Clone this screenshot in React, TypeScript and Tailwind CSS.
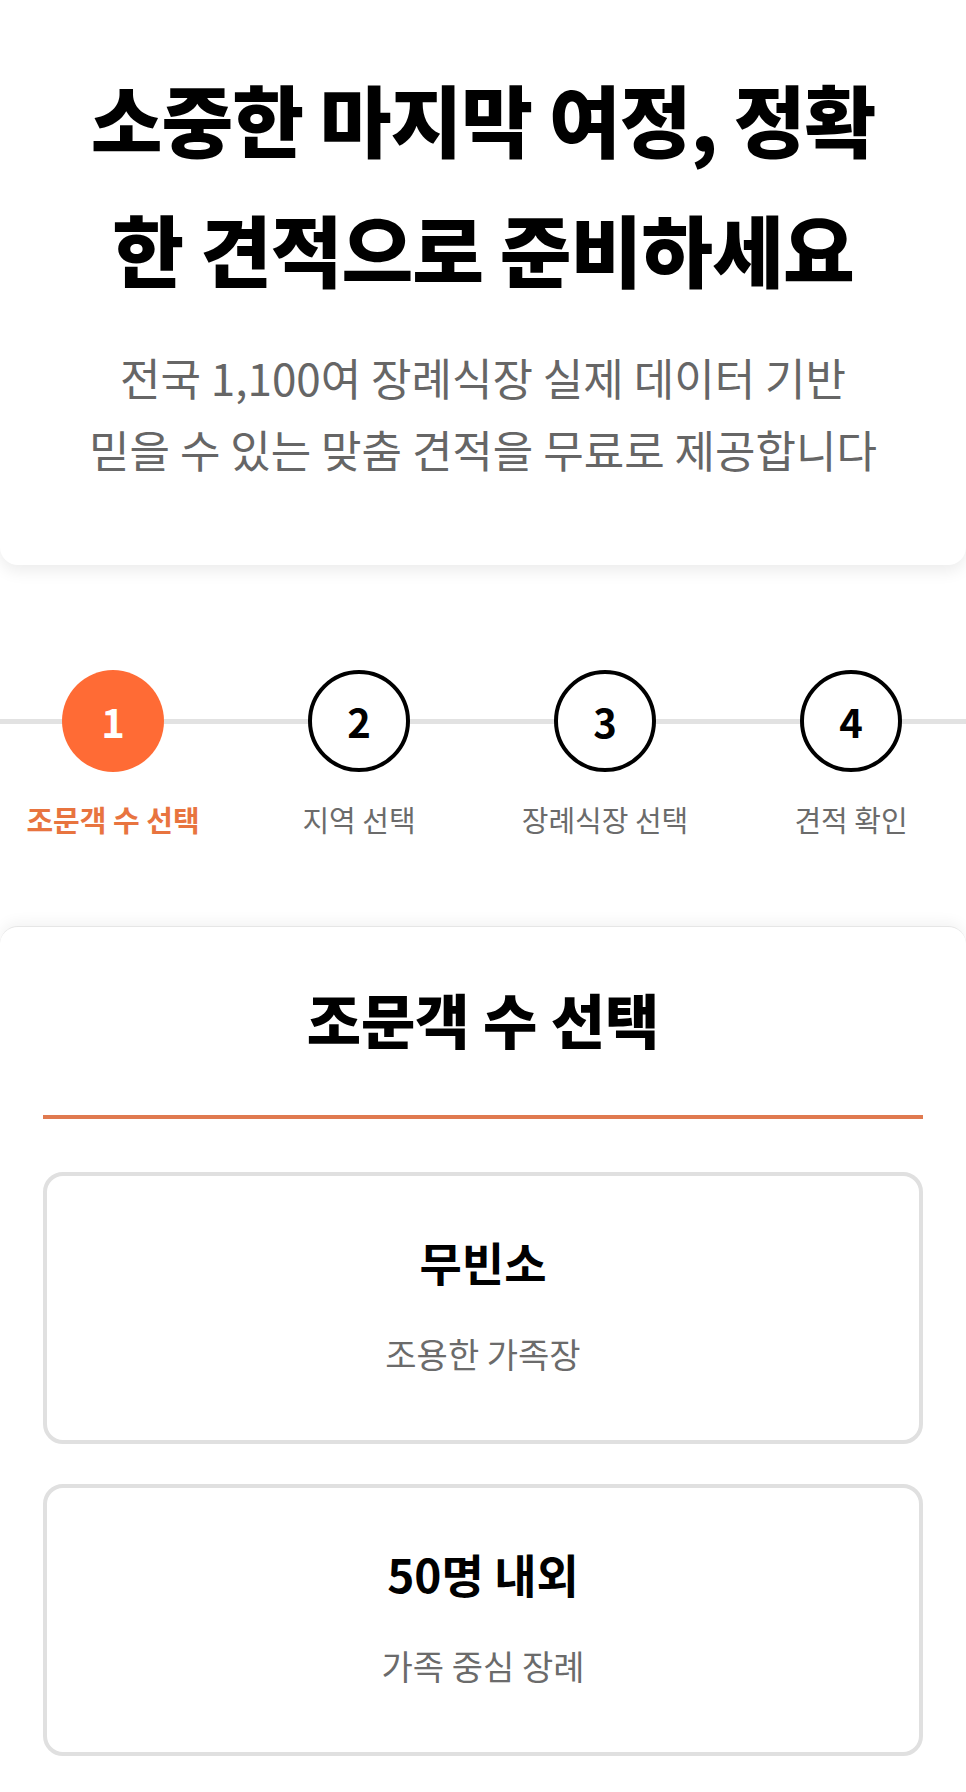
import React from "react";

const font = { fontFamily: '"Noto Sans CJK KR", "Noto Sans", sans-serif' };

const steps = [
  { n: 1, label: "조문객 수 선택", active: true },
  { n: 2, label: "지역 선택", active: false },
  { n: 3, label: "장례식장 선택", active: false },
  { n: 4, label: "견적 확인", active: false },
];

const options = [
  { title: "무빈소", desc: "조용한 가족장" },
  { title: "50명 내외", desc: "가족 중심 장례" },
  { title: "100명 내외", desc: "일반적인 장례" },
];

export default function App() {
  return (
    <div className="min-h-screen w-[966px] bg-white overflow-hidden" style={font}>
      {/* Hero card */}
      <section className="rounded-b-[18px] bg-white shadow-[0_6px_16px_rgba(0,0,0,0.08)] px-[30px] pt-[53px] pb-[80px] text-center">
        <h1 className="text-[78px] leading-[130px] font-black text-black tracking-[-1px] whitespace-nowrap">
          소중한 마지막 여정, 정확
          <br />
          한 견적으로 준비하세요
        </h1>
        <p className="mt-[28px] text-[44px] leading-[72px] text-[#666666] whitespace-nowrap">
          전국 1,100여 장례식장 실제 데이터 기반
          <br />
          믿을 수 있는 맞춤 견적을 무료로 제공합니다
        </p>
      </section>

      {/* Stepper */}
      <section className="relative mt-[105px]">
        <div className="absolute left-0 right-0 top-[49px] h-[5px] bg-[#e2e2e2]" />
        <div className="relative flex justify-between pl-[62px] pr-[64px]">
          {steps.map((s) => (
            <div key={s.n} className="flex w-[102px] flex-col items-center">
              <div
                className={
                  s.active
                    ? "flex h-[102px] w-[102px] items-center justify-center rounded-full bg-[#ff6b35] text-[40px] font-bold text-white"
                    : "flex h-[102px] w-[102px] items-center justify-center rounded-full border-[4px] border-black bg-white text-[40px] font-bold text-black"
                }
              >
                {s.n}
              </div>
              <div
                className={
                  s.active
                    ? "mt-[29px] whitespace-nowrap text-[29px] leading-[36px] font-bold text-[#e8743f]"
                    : "mt-[29px] whitespace-nowrap text-[29px] leading-[36px] text-[#6b6b6b]"
                }
              >
                {s.label}
              </div>
            </div>
          ))}
        </div>
      </section>

      {/* Selection card */}
      <section className="mt-[89px] rounded-t-[18px] border-t border-[#e6e6e6] bg-white shadow-[0_-4px_14px_rgba(0,0,0,0.05)] px-[43px] pt-[57px] pb-[60px]">
        <h2 className="text-center text-[59px] leading-[70px] font-black text-black">조문객 수 선택</h2>
        <div className="mt-[61px] h-[4px] bg-[#e07a50]" />
        <div className="mt-[53px] flex flex-col gap-[40px]">
          {options.map((o) => (
            <div
              key={o.title}
              className="flex h-[272px] flex-col items-center rounded-[20px] border-[4px] border-[#e0e0e0] bg-white pt-[55px]"
            >
              <div className="text-[46px] leading-[60px] font-bold text-black">{o.title}</div>
              <div className="mt-[38px] text-[34px] leading-[50px] text-[#6b6b6b]">{o.desc}</div>
            </div>
          ))}
        </div>
      </section>
    </div>
  );
}
